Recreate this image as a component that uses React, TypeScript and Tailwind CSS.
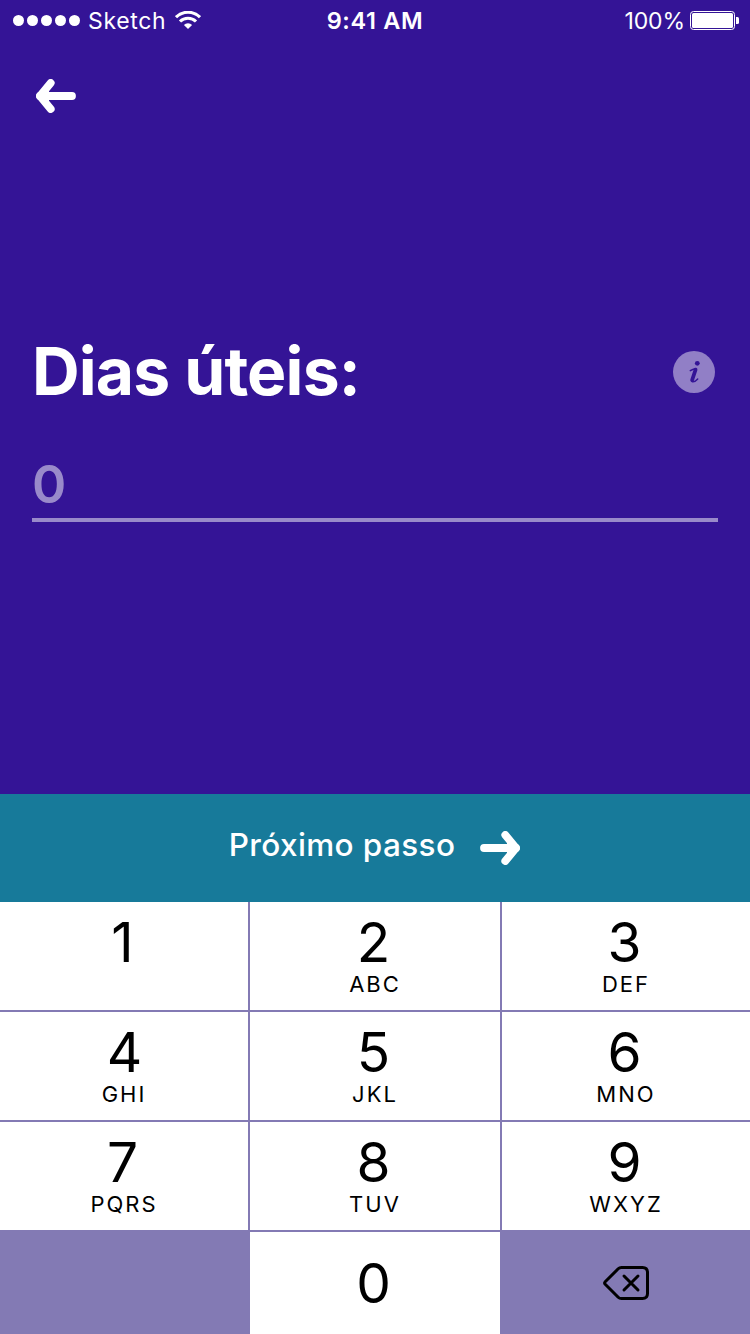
import React from "react";

type KeyDef = { digit: string; letters: string };

const KEYS: KeyDef[] = [
  { digit: "1", letters: "" },
  { digit: "2", letters: "ABC" },
  { digit: "3", letters: "DEF" },
  { digit: "4", letters: "GHI" },
  { digit: "5", letters: "JKL" },
  { digit: "6", letters: "MNO" },
  { digit: "7", letters: "PQRS" },
  { digit: "8", letters: "TUV" },
  { digit: "9", letters: "WXYZ" },
];

function ArrowIcon({ className }: { className?: string }) {
  return (
    <svg
      className={className}
      width="40"
      height="34"
      viewBox="0 0 40 34"
      fill="none"
      stroke="white"
      strokeLinecap="round"
      strokeLinejoin="round"
    >
      <path d="M4 17H36" strokeWidth="7.8" />
      <path d="M25.3 4L36 17L25.3 30" strokeWidth="7.8" />
      <path d="M28 9L35 17L28 25Z" strokeWidth="2" fill="white" />
    </svg>
  );
}

function WifiIcon() {
  return (
    <svg width="26" height="18" viewBox="0 0 26 18" fill="none" stroke="white" strokeWidth="3.1">
      <path d="M1 6.2A17 17 0 0 1 25 6.2" />
      <path d="M5 10.5A11.3 11.3 0 0 1 21 10.5" />
      <path d="M13 18L8.9 13.9A5.8 5.8 0 0 1 17.1 13.9Z" fill="white" stroke="none" />
    </svg>
  );
}

function BatteryIcon() {
  return (
    <svg width="49" height="19" viewBox="0 0 49 19" fill="none">
      <rect x="0.5" y="0.5" width="44" height="18" rx="3" stroke="white" />
      <rect x="2" y="2" width="41" height="15" rx="1.5" fill="white" />
      <path d="M46 6H47.5Q49 6 49 7.5V11.5Q49 13 47.5 13H46Z" fill="white" />
    </svg>
  );
}

function InfoIcon() {
  return (
    <svg className="mt-[4px]" width="42" height="42" viewBox="0 0 42 42" fill="none">
      <circle cx="21" cy="21" r="21" fill="#917fc6" />
      <circle cx="24.3" cy="12.3" r="2.4" fill="#341496" />
      <path
        d="M17.3 19.6C19.2 18.5 21 17.8 23 17.8"
        stroke="#341496"
        strokeWidth="1.5"
        strokeLinecap="round"
      />
      <path d="M22.6 18.6L19.1 29.2" stroke="#341496" strokeWidth="3.7" strokeLinecap="round" />
      <path
        d="M19 30.6C20.8 31.2 23 29.9 24.7 28"
        stroke="#341496"
        strokeWidth="1.5"
        strokeLinecap="round"
      />
    </svg>
  );
}

function BackspaceIcon() {
  return (
    <svg
      width="46"
      height="34"
      viewBox="0 0 46 34"
      fill="none"
      stroke="black"
      strokeWidth="3"
      strokeLinecap="round"
      strokeLinejoin="round"
    >
      <path d="M18.5 1.5H39.5Q44.5 1.5 44.5 6.5V27.5Q44.5 32.5 39.5 32.5H18.5Q16.5 32.5 15.2 31.2L2.2 18.3Q0.9 17 2.2 15.7L15.2 2.8Q16.5 1.5 18.5 1.5Z" />
      <path d="M21 10L35 24M35 10L21 24" />
    </svg>
  );
}

function StatusBar() {
  return (
    <div className="grid h-10 grid-cols-3 items-center text-[23px] leading-10 text-white">
      <div className="flex items-center pl-[13px]">
        <div className="flex gap-[3px]">
          {[0, 1, 2, 3, 4].map((n) => (
            <span key={n} className="size-[11px] rounded-full bg-white" />
          ))}
        </div>
        <span className="ml-[8px] mr-[9px] pt-[2px] leading-[38px] tracking-[0.65px]">Sketch</span>
        <WifiIcon />
      </div>
      <div className="pt-[2px] text-center text-[23.5px] font-semibold leading-[38px] tracking-[0.65px]">
        9:41 AM
      </div>
      <div className="flex items-center justify-end pr-[11px]">
        <span className="mr-[5px] pt-[2px] leading-[38px] tracking-[-0.1px]">100%</span>
        <BatteryIcon />
      </div>
    </div>
  );
}

export default function App() {
  return (
    <div className="flex h-[1334px] w-[750px] flex-col overflow-hidden bg-[#341496] font-['Inter',sans-serif]">
      <StatusBar />
      <header className="px-9 pt-[39px]">
        <ArrowIcon className="-scale-x-100" />
      </header>
      <main className="flex flex-1 flex-col px-8 pt-[217px]">
        <div className="flex items-center justify-between pr-[3px]">
          <h1 className="pt-[2px] text-[66px] font-bold leading-[78px] tracking-[-0.85px] text-white">
            Dias úteis:
          </h1>
          <InfoIcon />
        </div>
        <div className="mt-[46px] h-[66px] border-b-4 border-[#998aca] pt-[1px] text-[52px] font-semibold leading-[56px] text-[#998aca]">
          0
        </div>
      </main>
      <button className="flex h-[108px] items-center justify-center bg-[#177a9a] text-[31.5px] font-medium text-white">
        <span className="-mt-[6px] leading-10 tracking-[0.38px]">Próximo passo</span>
        <ArrowIcon className="ml-[25px] mr-[1px]" />
      </button>
      <div className="grid grid-cols-[248px_250px_248px] grid-rows-[108px_108px_108px_102px] gap-[2px] bg-[#837ab4] text-black">
        {KEYS.map((k) => (
          <div key={k.digit} className="flex flex-col items-center bg-white pt-[10px]">
            <span
              className={
                k.digit === "4" ? "pl-[1px] text-[55px] leading-[60px]" : "pr-[3px] text-[55px] leading-[60px]"
              }
            >
              {k.digit}
            </span>
            <span className="text-[22px] leading-[24px] tracking-[2px]">{k.letters}</span>
          </div>
        ))}
        <div />
        <div className="flex justify-center bg-white pr-[3px] pt-[21px] text-[55px] leading-[60px]">0</div>
        <div className="flex items-center justify-center">
          <BackspaceIcon />
        </div>
      </div>
    </div>
  );
}
